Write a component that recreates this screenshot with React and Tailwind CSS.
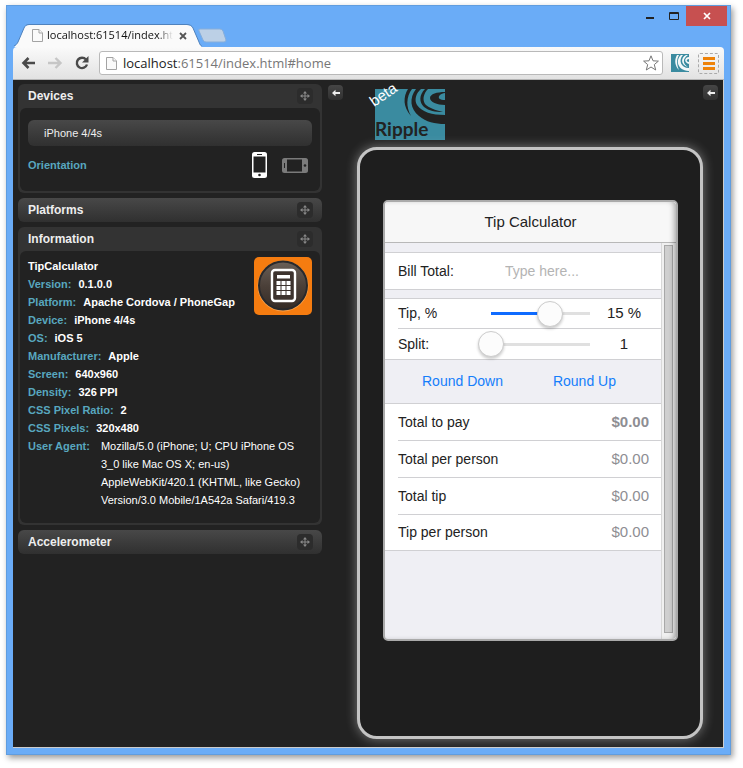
import React, { useState } from "react";

const info = [
  ["Version:", "0.1.0.0"],
  ["Platform:", "Apache Cordova / PhoneGap"],
  ["Device:", "iPhone 4/4s"],
  ["OS:", "iOS 5"],
  ["Manufacturer:", "Apple"],
  ["Screen:", "640x960"],
  ["Density:", "326 PPI"],
  ["CSS Pixel Ratio:", "2"],
  ["CSS Pixels:", "320x480"],
];

const PageIcon = ({ className }) => (
  <svg viewBox="0 0 11 13" className={className} fill="#fafafa" stroke="#a3a3a3">
    <path d="M.5 .5H7L10.500 4V12.500H.5Z" />
    <path d="M7 .5V4H10.500" />
  </svg>
);

const RippleMark = ({ className }) => (
  <svg viewBox="0 0 18 18" className={className}>
    <rect width="18" height="18" fill="#3a8ba0" />
    <g fill="#f4f8f9">
      <path d="M6 1C3 6 4 12 8 16C6 11 5 6 8 1Z" />
      <path d="M10 1C5 5 5 16 18 17V14C10 14 7 6 12 1Z" />
      <path d="M15 1C10 3 9 11 17 13C12 10 11 5 17 1Z" />
      <path d="M18 3C14 3 12 8 18 10V8C15 8 15 5 18 5Z" />
    </g>
  </svg>
);

const TitleBar = () => (
  <header className="flex justify-between h-[41px]">
    <div className="flex items-end pl-[7px] pt-[18px]">
      <div className="relative w-[188px] h-[23px] flex items-center pl-[18px] pr-3">
        <svg
          viewBox="0 0 188 23"
          className="absolute inset-0 w-full h-full"
          preserveAspectRatio="none"
        >
          <path
            d="M0 23C2 21 3 20 4 18L10 4C11 2 12 1 15 1H173C176 1 178 2 179 4L185 18C186 21 187 22 188 23Z"
            fill="#fafafa"
          />
          <path
            d="M0 22C2 21 3 20 4 18L10 4C11 2 12 .5 15 .5H173C176 .5 178 2 179 4L185 18C186 21 187 22 188 22"
            fill="none"
            stroke="#4f82bd"
          />
        </svg>
        <PageIcon className="relative w-[11px] h-[13px] mr-[4px] shrink-0" />
        <span className="relative w-[126px] whitespace-nowrap text-[11px] text-[#111] [mask-image:linear-gradient(to_right,black_88%,transparent)]">
          localhost:61514/index.ht
        </span>
        <button aria-label="Close tab" className="relative ml-[6px]">
          <svg viewBox="0 0 8 8" className="w-[8px] h-[8px]" stroke="#555" strokeWidth="1.800">
            <path d="M1 1L7 7M7 1L1 7" />
          </svg>
        </button>
      </div>
      <button aria-label="New tab" className="self-center -ml-[5px]">
        <svg viewBox="0 0 30 15" className="w-[30px] h-[15px]">
          <path
            d="M3 1H23Q25 1 26 3L29 12Q29 14 27 14H9Q7 14 6 12L2 3Q1 1 3 1Z"
            fill="#bcd0e6"
            stroke="#86aedb"
          />
        </svg>
      </button>
    </div>
    <div className="flex h-5 mr-[3px]">
      <button aria-label="Minimize" className="w-6 flex justify-center">
        <svg viewBox="0 0 8 20" className="w-2 h-5">
          <path d="M0 12H8" stroke="#222" strokeWidth="2" />
        </svg>
      </button>
      <button aria-label="Maximize" className="w-6 flex justify-center items-center">
        <svg viewBox="0 0 10 8" className="w-[10px] h-2" fill="none" stroke="#222">
          <path d="M.5 .5H9.500V7.500H.5ZM0 1.500H10" />
        </svg>
      </button>
      <button
        aria-label="Close"
        className="w-[41px] bg-[#c75050] flex justify-center items-center"
      >
        <svg viewBox="0 0 8 8" className="w-2 h-2" stroke="#fff" strokeWidth="1.700">
          <path d="M1 1L7 7M7 1L1 7" />
        </svg>
      </button>
    </div>
  </header>
);

const Toolbar = () => (
  <div className="flex items-center h-[33px] mx-[6px] px-2 rounded-t-sm bg-linear-to-b from-[#fafafa] to-[#e2e2e2] border-b border-[#b5b5b5]">
    <button aria-label="Back" className="mr-3">
      <svg viewBox="0 0 15 12" className="w-[15px] h-3" fill="none" stroke="#4a4a4a" strokeWidth="2.600">
        <path d="M14 6H2.500M7.500 1L2.500 6L7.500 11" />
      </svg>
    </button>
    <button aria-label="Forward" className="mr-3">
      <svg viewBox="0 0 15 12" className="w-[15px] h-3" fill="none" stroke="#c6c6c6" strokeWidth="2.400">
        <path d="M0 6H12M7.500 1L12.500 6L7.500 11" />
      </svg>
    </button>
    <button aria-label="Reload" className="mr-[10px]">
      <svg viewBox="0 0 14 14" className="w-[14px] h-[14px]">
        <path
          d="M11 3.500A5.200 5.200 0 1 0 12 8.500"
          fill="none"
          stroke="#4a4a4a"
          strokeWidth="2.400"
        />
        <path d="M13.500 0V6.500H7Z" fill="#4a4a4a" />
      </svg>
    </button>
    <div className="flex flex-1 items-center h-6 pl-[6px] pr-[3px] bg-white border border-[#b9b9b9] rounded-[3px]">
      <PageIcon className="w-[11px] h-[13px] mr-[6px]" />
      <p className="flex-1 text-[13px] leading-5 text-[#777]">
        <span className="text-[#222]">localhost</span>:61514/index.html#home
      </p>
      <button aria-label="Bookmark">
        <svg viewBox="0 0 16 16" className="w-4 h-4" fill="#fff" stroke="#777" strokeLinejoin="round">
          <path d="M8 .8L10 5.800L15.400 6.100L11.300 9.600L12.700 15L8 12L3.300 15L4.700 9.600L.6 6.100L6 5.800Z" />
        </svg>
      </button>
    </div>
    <button aria-label="Ripple" className="ml-2">
      <RippleMark className="w-[18px] h-[18px]" />
    </button>
    <button
      aria-label="Menu"
      className="flex flex-col gap-[2px] justify-center items-center w-[21px] h-[21px] ml-[9px] -mr-[3px] rounded-xs border border-dashed border-[#aaa]"
    >
      <span className="w-3 h-[3px] bg-[#ee8208]" />
      <span className="w-3 h-[3px] bg-[#ee8208]" />
      <span className="w-3 h-[3px] bg-[#ee8208]" />
    </button>
  </div>
);

const Panel = ({ title, children }) => (
  <section
    className={
      children
        ? "rounded-md bg-[#333] px-[2px] pb-[2px]"
        : "rounded-md bg-linear-to-b from-[#484848] to-[#303030] px-[2px]"
    }
  >
    <div className="flex items-center justify-between h-6 pl-2 pr-[7px]">
      <h2 className="font-bold text-[12px] text-[#eee]">{title}</h2>
      <button
        aria-label={"Move " + title}
        className="w-4 h-4 flex items-center justify-center rounded-sm bg-[#2c2c2c]"
      >
        <svg viewBox="0 0 10 10" className="w-[10px] h-[10px]" fill="#888">
          <path d="M5 0L7 2.500H3ZM5 10L7 7.500H3ZM0 5L2.500 3V7ZM10 5L7.500 3V7Z" />
          <path d="M4.500 2H5.500V8H4.500ZM2 4.500H8V5.500H2Z" />
        </svg>
      </button>
    </div>
    {children && <div className="rounded-md bg-[#222] px-2">{children}</div>}
  </section>
);

const Devices = () => (
  <Panel title="Devices">
    <div className="pt-3 pb-[11px]">
      <button className="block w-full h-[26px] pl-4 text-left text-[11px] text-[#eee] rounded-md bg-linear-to-b from-[#484848] to-[#303030]">
        iPhone 4/4s
      </button>
      <div className="flex items-center h-[30px] mt-1 pr-1">
        <span className="flex-1 font-bold text-[11px] text-[#58a7bf]">Orientation</span>
        <button aria-label="Portrait">
          <svg viewBox="0 0 15 26" className="w-[15px] h-[26px]">
            <rect width="15" height="26" rx="2.500" fill="#fff" />
            <path d="M1.500 4.500H13.500V20.500H1.500Z" fill="#222" />
            <path d="M5 2.500H10" stroke="#222" />
            <circle cx="7.500" cy="23" r="1.300" fill="#222" />
          </svg>
        </button>
        <button aria-label="Landscape" className="ml-[15px]">
          <svg viewBox="0 0 26 15" className="w-[26px] h-[15px]">
            <rect width="26" height="15" rx="2.500" fill="#7b7b7b" />
            <path d="M5 1.500H20V13.500H5Z" fill="#222" />
            <path d="M2.500 5V10" stroke="#222" />
            <circle cx="23" cy="7.500" r="1.300" fill="#222" />
          </svg>
        </button>
      </div>
    </div>
  </Panel>
);

const AppIcon = () => (
  <svg viewBox="0 0 58 58" className="w-[58px] h-[58px] max-w-none shrink-0">
    <defs>
      <linearGradient id="disc" x1="0" y1="0" x2="0" y2="1">
        <stop offset="0" stopColor="#6a6058" />
        <stop offset=".5" stopColor="#4b4039" />
        <stop offset="1" stopColor="#352b25" />
      </linearGradient>
    </defs>
    <rect width="58" height="58" rx="5" fill="#f57c10" />
    <circle cx="29" cy="29" r="25.500" fill="#f9a24c" />
    <circle cx="29" cy="28.500" r="24" fill="url(#disc)" stroke="#28292c" strokeWidth="2" />
    <rect x="18" y="13" width="23" height="31" rx="3" fill="#3d332e" stroke="#fff" strokeWidth="2.400" />
    <path d="M23 18H36V21.500H23Z" fill="#fff" />
    <path
      d="M22.500 26H36.500M22.500 31H36.500M22.500 36H36.500"
      stroke="#fff"
      strokeWidth="4"
      strokeDasharray="4 1"
    />
  </svg>
);

const Information = () => (
  <Panel title="Information">
    <div className="flex justify-between pt-[6px] pb-[14px] text-[11px] leading-[18px] text-white">
      <div className="flex-1">
        <p className="font-bold">TipCalculator</p>
        <dl>
          {info.map(([label, value]) => (
            <div key={label} className="flex gap-[7px] font-bold whitespace-nowrap">
              <dt className="text-[#58a7bf]">{label}</dt>
              <dd>{value}</dd>
            </div>
          ))}
          <div className="flex gap-[11px]">
            <dt className="font-bold text-[#58a7bf] whitespace-nowrap">User Agent:</dt>
            <dd className="whitespace-nowrap">
              Mozilla/5.0 (iPhone; U; CPU iPhone OS
              <br />
              3_0 like Mac OS X; en-us)
              <br />
              AppleWebKit/420.1 (KHTML, like Gecko)
              <br />
              Version/3.0 Mobile/1A542a Safari/419.3
            </dd>
          </div>
        </dl>
      </div>
      <div className="w-0 flex justify-end items-start">
        <AppIcon />
      </div>
    </div>
  </Panel>
);

const PanelArrow = ({ label }) => (
  <button
    aria-label={label}
    className="w-[15px] h-[15px] flex items-center justify-center rounded-sm bg-linear-to-b from-[#464646] to-[#303030]"
  >
    <svg viewBox="0 0 8 8" className="w-2 h-2">
      <path d="M0 4L3.500 .8V3H8V5H3.500V7.200Z" fill="#eee" />
    </svg>
  </button>
);

const RippleLogo = () => (
  <svg
    viewBox="0 0 80 60"
    className="w-20 h-[60px] -mb-px overflow-visible"
    role="img"
    aria-label="Ripple beta"
  >
    <path d="M8 9H78V60H8Z" fill="#3a8ba0" />
    <g fill="#222">
      <path d="M41 9C36 17 36 27 44 36C39 27 39 17 45 9Z" />
      <path d="M49 9C42 18 43 29 52 36C59 42 68 44 78 44V35C65 35 55 32 50 25C47 20 49 13 54 9Z" />
      <path d="M58 9C52 15 52 22 57 27C62 31 68 32 76 32C68 30 62 28 58 24C55 19 57 13 61 9Z" />
      <path d="M78 12C70 12 63 14 63 18C63 22 70 25 78 25V20C73 20 70 18 73 15C74 14 76 13 78 13Z" />
    </g>
    <text x="8" y="56" fontSize="19" fontWeight="700" fontFamily="Lato, sans-serif" fill="#222">
      Ripple
    </text>
    <text
      x="7"
      y="27"
      fontSize="15"
      fontFamily="'Liberation Sans', sans-serif"
      fill="#fff"
      transform="rotate(-34 7 27)"
    >
      beta
    </text>
  </svg>
);

const SliderRow = ({ id, label, min, max, value, suffix, onChange }) => {
  const percent = ((value - min) / (max - min)) * 100;
  return (
    <div className="flex items-center h-[30px] ml-[13px] border-b border-[#d0d0d3] last:border-0">
      <label htmlFor={id} className="flex-1">
        {label}
      </label>
      <input
        id={id}
        type="range"
        min={min}
        max={max}
        value={value}
        onChange={(e) => onChange(Number(e.target.value))}
        className="relative appearance-none w-[125px] h-[26px] bg-no-repeat bg-center bg-size-[100%_3px] [&::-webkit-slider-thumb]:appearance-none [&::-webkit-slider-thumb]:w-[26px] [&::-webkit-slider-thumb]:h-[26px] [&::-webkit-slider-thumb]:rounded-full [&::-webkit-slider-thumb]:bg-[#fcfcfc] [&::-webkit-slider-thumb]:border [&::-webkit-slider-thumb]:border-[#ccc] [&::-webkit-slider-thumb]:shadow-[0_2px_3px_rgba(0,0,0,0.2)]"
        style={{
          backgroundImage: `linear-gradient(to right, transparent 13px, #0f6bff 13px, #0f6bff calc(13px + (100% - 26px) * ${percent / 100}), #e0e0e0 0, #e0e0e0 calc(100% - 13px), transparent 0)`,
        }}
      />
      <output htmlFor={id} className="w-[42px] mr-4 text-center text-[15px]">
        {value}
        {suffix}
      </output>
    </div>
  );
};

const TipCalculator = () => {
  const [bill, setBill] = useState("");
  const [tip, setTip] = useState(15);
  const [split, setSplit] = useState(1);

  const amount = Number(bill) || 0;
  const tipAmount = (amount * tip) / 100;
  const total = amount + tipAmount;
  const totals = [
    ["Total to pay", total],
    ["Total per person", total / split],
    ["Total tip", tipAmount],
    ["Tip per person", tipAmount / split],
  ];

  return (
    <div className="relative flex flex-col flex-1 overflow-hidden rounded-[5px] border-2 border-[#aaa] bg-[#efeff4] text-[14px] text-[#222]">
      <h1 className="h-[41px] leading-[40px] text-center text-[15px] bg-[#f7f7f7] border-b border-[#b8b8b8]">
        Tip Calculator
      </h1>
      <div className="flex flex-1">
        <div className="flex-1 border-r border-[#d8d8d8]">
          <div className="flex items-center h-[38px] mt-[9px] pl-[13px] bg-white border-y border-[#d0d0d3]">
            <label htmlFor="bill" className="w-[107px]">
              Bill Total:
            </label>
            <input
              id="bill"
              value={bill}
              onChange={(e) => setBill(e.target.value)}
              placeholder="Type here..."
              className="w-[140px] outline-none placeholder:text-[#b4b4b4]"
            />
          </div>
          <div className="mt-2 bg-white border-y border-[#d0d0d3]">
            <SliderRow id="tip" label="Tip, %" min={0} max={25} value={tip} suffix=" %" onChange={setTip} />
            <SliderRow id="split" label="Split:" min={1} max={10} value={split} onChange={setSplit} />
          </div>
          <div className="flex h-[43px] items-center pl-[37px] gap-[50px] text-[#157efb]">
            <button onClick={() => setTip(Math.floor(tip))}>Round Down</button>
            <button onClick={() => setTip(Math.ceil(tip))}>Round Up</button>
          </div>
          <dl className="bg-white border-y border-[#d0d0d3]">
            {totals.map(([label, value]) => (
              <div
                key={label}
                className="group flex items-center justify-between h-[37px] last:h-[35px] ml-[13px] pr-3 border-b border-[#d0d0d3] last:border-0"
              >
                <dt>{label}</dt>
                <dd className="text-[15px] text-[#8e8e93] group-first:font-bold">
                  ${value.toFixed(2)}
                </dd>
              </div>
            ))}
          </dl>
        </div>
        <div className="w-[14px] bg-[#f0f0f0] pt-[2px] pb-[6px] pl-[2px] pr-[3px]">
          <div className="h-full border border-[#a8a8a8] bg-[#cfcfcf]" />
        </div>
      </div>
      <div className="absolute inset-0 pointer-events-none rounded-[3px] shadow-[inset_-4px_0_6px_-3px_rgba(0,0,0,0.4)]" />
    </div>
  );
};

export default function App() {
  return (
    <div className="flex min-h-screen bg-white pt-[5px] pl-[6px] pr-3 pb-[13px] font-['Liberation_Sans',Arial,sans-serif]">
      <div className="flex flex-col flex-1 bg-[#6aacf7] border border-[#609ddf] pb-[6px] shadow-[2px_3px_6px_rgba(0,0,0,0.4)]">
        <div className="font-['Open_Sans',sans-serif]">
          <TitleBar />
          <Toolbar />
        </div>
        <main className="flex flex-1 items-stretch mx-[6px] bg-[#222] border-r border-b border-[#ccc]">
          <aside className="flex flex-col gap-[5px] w-[304px] ml-[5px] mt-[4px] shrink-0">
            <Devices />
            <Panel title="Platforms" />
            <Information />
            <Panel title="Accelerometer" />
          </aside>
          <div className="ml-[6px] mt-[5px]">
            <PanelArrow label="Collapse left panels" />
          </div>
          <div className="flex flex-col flex-1 ml-[14px] pb-[8px]">
            <div className="ml-[10px] mb-2">
              <RippleLogo />
            </div>
            <div className="flex flex-col flex-1 rounded-[20px] border-[3px] border-[#c4c4c4] bg-[#1e1e1e] pl-[23px] pr-[22px] pt-[50px] pb-[95px] shadow-[0_0_12px_rgba(255,255,255,0.4)]">
              <TipCalculator />
            </div>
          </div>
          <div className="mr-[5px] mt-[5px]">
            <PanelArrow label="Collapse right panels" />
          </div>
        </main>
      </div>
    </div>
  );
}
